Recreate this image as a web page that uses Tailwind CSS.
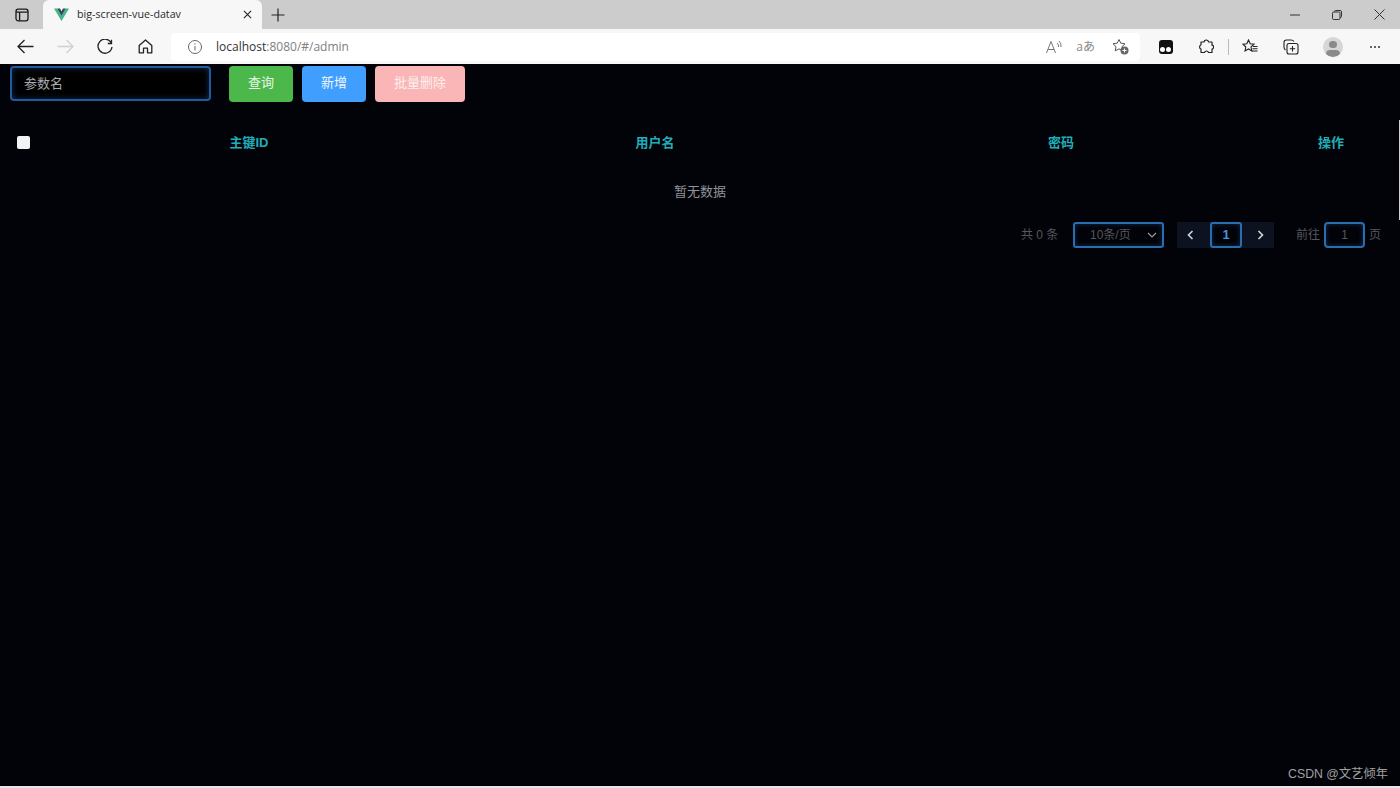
<!DOCTYPE html>
<html lang="zh-CN">
<head>
<meta charset="utf-8">
<title>big-screen-vue-datav</title>
<script src="https://cdn.jsdelivr.net/npm/@tailwindcss/browser@4"></script>
</head>
<body class="m-0 overflow-hidden bg-[#020308]">
<div class="relative flex h-[788px] w-[1400px] flex-col font-['Liberation_Sans','Noto_Sans_CJK_SC',sans-serif]">

  <!-- tab strip -->
  <div class="flex h-[29px] shrink-0 items-end bg-[#cccccc]">
    <div class="flex h-[29px] w-[43px] items-center justify-center">
      <svg width="14" height="14" viewBox="0 0 14 14" fill="none" stroke="#1a1a1a" stroke-width="1.3"><rect x="1" y="1.2" width="12" height="11.6" rx="2.2"/><path d="M1 4.2H13M4.6 4.2V12.8"/></svg>
    </div>
    <div class="flex h-[29px] w-[219px] items-center rounded-t-[6px] bg-[#f7f7f7] pl-[11px] pr-[10px] font-['Open_Sans','Noto_Sans',sans-serif]">
      <svg width="15" height="13" viewBox="0 0 15 13"><path d="M0 0.5H3.2L7.5 8L11.8 0.5H15L7.5 13Z" fill="#41b883"/><path d="M3.2 0.5H6L7.5 3.2L9 0.5H11.8L7.5 8Z" fill="#35495e"/></svg>
      <span class="ml-[8px] flex-1 text-[10.7px] leading-none text-[#2b2b2b]">big-screen-vue-datav</span>
      <svg width="9" height="9" viewBox="0 0 10 10" stroke="#222" stroke-width="1.2"><path d="M1 1L9 9M9 1L1 9"/></svg>
    </div>
    <div class="flex h-[29px] w-[32px] items-center justify-center">
      <svg width="14" height="14" viewBox="0 0 14 14" stroke="#222" stroke-width="1.2"><path d="M7 0.5V13.5M0.5 7H13.5"/></svg>
    </div>
    <div class="flex-1"></div>
    <div class="flex h-[29px] items-center">
      <div class="flex w-[42px] justify-center"><svg width="10" height="10" viewBox="0 0 10 10" stroke="#333" stroke-width="1"><path d="M0 5H10"/></svg></div>
      <div class="flex w-[42px] justify-center"><svg width="10" height="10" viewBox="0 0 10 10" fill="none" stroke="#333" stroke-width="1"><rect x="0.5" y="2" width="7.5" height="7.5" rx="1.2"/><path d="M2.5 2V1.6Q2.5 0.5 3.6 0.5H8Q9.5 0.5 9.5 2V6.4Q9.5 7.5 8 7.5"/></svg></div>
      <div class="flex w-[42px] justify-center"><svg width="11" height="11" viewBox="0 0 11 11" stroke="#333" stroke-width="1"><path d="M0.5 0.5L10.5 10.5M10.5 0.5L0.5 10.5"/></svg></div>
    </div>
  </div>

  <!-- toolbar -->
  <div class="flex h-[35px] shrink-0 items-center bg-[#f7f7f7]">
    <div class="flex w-[171px] items-center">
      <div class="flex w-[50px] justify-center pl-[1px]"><svg width="17" height="15" viewBox="0 0 17 15" fill="none" stroke="#222" stroke-width="1.3"><path d="M16.5 7.5H1M7.5 1L1 7.5L7.5 14"/></svg></div>
      <div class="flex w-[30px] justify-center"><svg width="17" height="15" viewBox="0 0 17 15" fill="none" stroke="#d0d0d0" stroke-width="1.3"><path d="M0.5 7.5H16M9.5 1L16 7.5L9.5 14"/></svg></div>
      <div class="flex w-[50px] justify-center"><svg width="16" height="16" viewBox="0 0 16 16" fill="none" stroke="#222" stroke-width="1.3"><path d="M14 3.5A7 7 0 1 0 15 8M14.5 0.8V4.5H10.8"/></svg></div>
      <div class="flex w-[30px] justify-center"><svg width="15" height="15" viewBox="0 0 15 15" fill="none" stroke="#222" stroke-width="1.3" stroke-linejoin="round"><path d="M1.2 6.5L7.5 1L13.8 6.5V13.8H9.5V9.2H5.5V13.8H1.2Z"/></svg></div>
    </div>
    <div class="flex h-[28px] w-[969px] items-center rounded-[4px] bg-white pl-[17px] font-['Open_Sans','Noto_Sans',sans-serif]">
      <svg width="14" height="14" viewBox="0 0 14 14" fill="none" stroke="#666" stroke-width="1"><circle cx="7" cy="7" r="6.5"/><path d="M7 6V10.5M7 3.4V4.7"/></svg>
      <span class="ml-[14px] text-[12px] leading-none text-[#333]">localhost<span class="text-[#808080]">:8080/#/admin</span></span>
      <div class="flex-1"></div>
      <svg class="mr-[14px]" width="16" height="14" viewBox="0 0 16 14" fill="none" stroke="#777" stroke-width="1"><path d="M0.5 13L5 1.5L9.5 13M2 9.5H8M11 3Q13 4.5 12.5 7M13 1Q15.5 3.5 15 7"/></svg>
      <span class="mr-[17px] text-[12px] leading-none text-[#888]">aあ</span>
      <svg class="mr-[11px]" width="17" height="17" viewBox="0 0 17 17"><path d="M7 1.5L8.8 5.2L13 5.8L10 8.7L10.7 12.8L7 10.9L3.3 12.8L4 8.7L1 5.8L5.2 5.2Z" fill="none" stroke="#555" stroke-width="1"/><circle cx="12.5" cy="12.5" r="4" fill="#666"/><path d="M12.5 10.5V14.5M10.5 12.5H14.5" stroke="#fff" stroke-width="1"/></svg>
    </div>
    <div class="flex flex-1 items-center">
      <div class="flex w-[51px] justify-center"><div class="relative h-[14px] w-[14px] rounded-[3px] bg-[#111]"><div class="absolute bottom-[2px] left-[1.5px] h-[5px] w-[5px] rounded-full bg-white"></div><div class="absolute bottom-[2px] right-[1.5px] h-[5px] w-[5px] rounded-full bg-white"></div></div></div>
      <div class="flex w-[30px] justify-center"><svg width="15" height="15" viewBox="0 0 15 15" fill="none" stroke="#222" stroke-width="1.2" stroke-linejoin="round"><path d="M5 3Q5.5 0.8 7.5 1Q9.5 1.2 9.5 3H13V6.2Q15 6.5 14.5 8.5Q14 10.2 13 10V13.5H9.5Q9 12 7.5 12Q6 12 5.5 13.5H2V10Q0.3 9.5 0.7 7.5Q1 5.8 2 6V3Z"/></svg></div>
      <div class="ml-[7px] h-[16px] w-px bg-[#bbb]"></div>
      <div class="ml-[5px] flex w-[32px] justify-center"><svg width="16" height="15" viewBox="0 0 16 15" fill="none" stroke="#222" stroke-width="1.1"><path d="M6.5 1L8.2 4.8L12 5.2L9 8L9.8 12L6.5 10L3 12L3.8 8L1 5.2L4.8 4.8Z"/><path d="M11 7.5H15.5M10.5 9.8H15.5M10 12H15.5"/></svg></div>
      <div class="ml-[9px] flex w-[32px] justify-center"><svg width="16" height="16" viewBox="0 0 16 16" fill="none" stroke="#222" stroke-width="1.1"><rect x="4" y="4.5" width="11" height="10.5" rx="2"/><path d="M2.5 11Q1 10 1 8V3.5Q1 1 3.5 1H8Q10 1 11 2.5M9.5 7V12.5M6.8 9.8H12.2"/></svg></div>
      <div class="ml-[10px] flex w-[32px] justify-center"><div class="relative h-[20px] w-[20px] overflow-hidden rounded-full bg-[#d6d6d6]"><div class="absolute left-[6px] top-[4px] h-[7px] w-[8px] rounded-full bg-[#8a8a8a]"></div><div class="absolute left-[3px] top-[13px] h-[8px] w-[14px] rounded-full bg-[#8a8a8a]"></div></div></div>
      <div class="ml-[10px] flex w-[32px] justify-center gap-[2px]"><i class="h-[2px] w-[2px] rounded-full bg-[#333]"></i><i class="h-[2px] w-[2px] rounded-full bg-[#333]"></i><i class="h-[2px] w-[2px] rounded-full bg-[#333]"></i></div>
    </div>
  </div>

  <!-- page -->
  <div class="relative flex-1 bg-[#020308]">
    <!-- search row -->
    <div class="flex items-start pl-[10px] pt-[2px]">
      <div class="flex h-[35px] w-[201px] items-center rounded-[4px] border-2 border-[#245a9c] bg-black pl-[12px] text-[13px] text-[#a8abb2] shadow-[inset_0_0_6px_rgba(40,100,180,0.45)]">参数名</div>
      <div class="ml-[18px] flex h-[36px] w-[64px] items-center justify-center rounded-[4px] bg-[#4cb84c] pb-[2px] text-[13px] text-[#e8f5e8]">查询</div>
      <div class="ml-[9px] flex h-[36px] w-[64px] items-center justify-center rounded-[4px] bg-[#409eff] pb-[2px] text-[13px] text-[#eef6ff]">新增</div>
      <div class="ml-[9px] flex h-[36px] w-[90px] items-center justify-center rounded-[4px] bg-[#fab6b6] pb-[2px] text-[13px] text-[#fdeeee]">批量删除</div>
    </div>
    <!-- table header -->
    <div class="mt-[20px] flex h-[42px] items-center pb-[1px] text-[13px] font-bold text-[#20aeb8]">
      <div class="w-[48px] pl-[17px]"><div class="h-[13px] w-[13px] rounded-[2px] bg-[#f2f3f5]"></div></div>
      <div class="w-[402px] text-center">主键ID</div>
      <div class="w-[410px] text-center">用户名</div>
      <div class="w-[402px] text-center">密码</div>
      <div class="w-[138px] text-center">操作</div>
    </div>
    <!-- empty -->
    <div class="flex h-[56px] items-center justify-center pb-[1px] text-[13px] text-[#909399]">暂无数据</div>
    <!-- pagination -->
    <div class="mt-[2px] flex h-[26px] items-center pl-[1021px] text-[12px] text-[#55575c]">
      <span class="w-[37px] whitespace-nowrap">共 0 条</span>
      <div class="ml-[15px] flex h-[26px] w-[91px] items-center rounded-[3px] border-2 border-[#2a6cb0] pl-[15px] pr-[5px] text-[#55575c] shadow-[inset_0_0_5px_rgba(40,100,180,0.4)]">
        <span class="flex-1">10条/页</span>
        <svg width="10" height="6" viewBox="0 0 10 6" fill="none" stroke="#9a9a9a" stroke-width="1.2"><path d="M1 1L5 5L9 1"/></svg>
      </div>
      <div class="ml-[13px] flex h-[26px] w-[97px] items-center bg-[#0c1220]">
        <div class="flex w-[27px] justify-center"><svg width="7" height="10" viewBox="0 0 7 10" fill="none" stroke="#d6d6d6" stroke-width="1.6"><path d="M5.5 1L1.5 5L5.5 9"/></svg></div>
        <div class="ml-[6px] flex h-[26px] w-[32px] shrink-0 items-center justify-center rounded-[3px] border-2 border-[#2a6cb0] bg-[#020308] text-[13px] font-bold text-[#4a93d8] shadow-[inset_0_0_5px_rgba(40,100,180,0.4)]">1</div>
        <div class="flex w-[32px] justify-center pl-[4px]"><svg width="7" height="10" viewBox="0 0 7 10" fill="none" stroke="#d6d6d6" stroke-width="1.6"><path d="M1.5 1L5.5 5L1.5 9"/></svg></div>
      </div>
      <span class="ml-[22px] w-[24px] whitespace-nowrap">前往</span>
      <div class="ml-[4px] flex h-[26px] w-[41px] items-center justify-center rounded-[4px] border-2 border-[#2a6cb0] shadow-[inset_0_0_5px_rgba(40,100,180,0.4)]">1</div>
      <span class="ml-[4px]">页</span>
    </div>
    <!-- scrollbar hint -->
    <div class="absolute right-0 top-[56px] h-[100px] w-px bg-[#d0d0d0]"></div>
    <!-- watermark -->
    <div class="absolute bottom-[4px] right-[12px] text-[12.3px] leading-[16px] text-[#a0a0a0]">CSDN @文艺倾年</div>
  </div>
  <div class="h-[2px] shrink-0 bg-[#e6e6e6]"></div>
</div>
</body>
</html>
